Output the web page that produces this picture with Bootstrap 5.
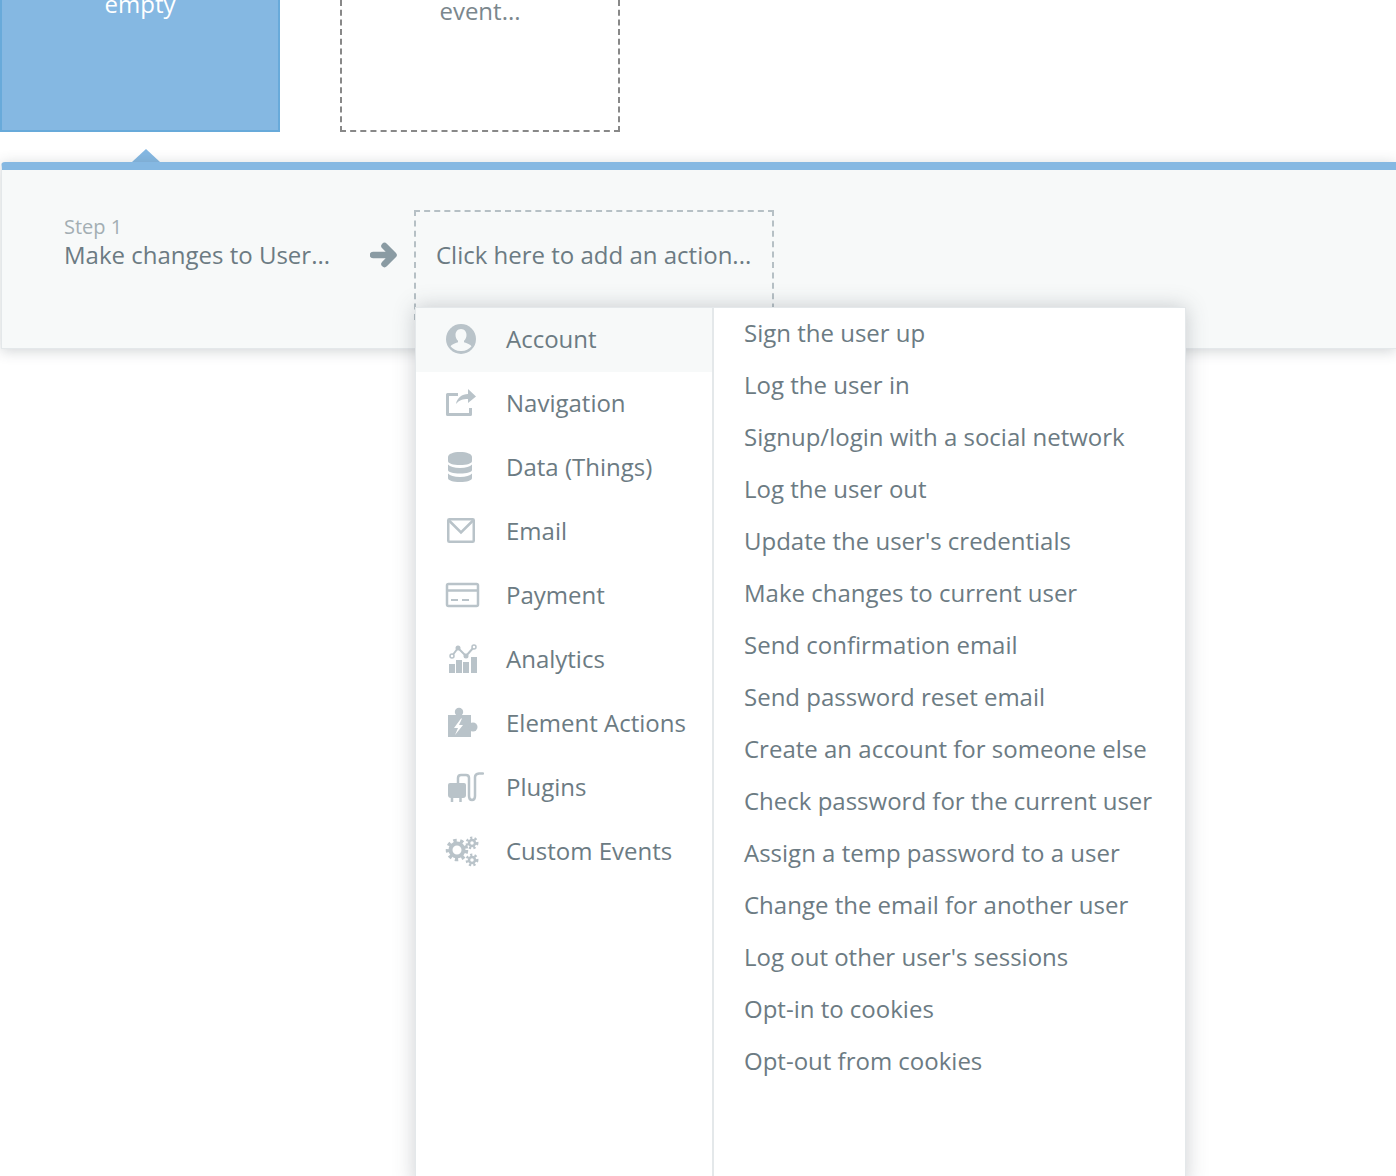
<!DOCTYPE html>
<html lang="en">
<head>
<meta charset="utf-8">
<title>Workflow</title>
<link href="https://cdn.jsdelivr.net/npm/bootstrap@5.3.0/dist/css/bootstrap.min.css" rel="stylesheet">
<style>
html,body{height:1176px;overflow:hidden;background:#fff}
body{font-family:"Open Sans","Liberation Sans",sans-serif;color:#6c7b83;font-size:24px;letter-spacing:0}
.ev-row{height:162px;gap:60px;align-items:flex-start;position:relative}
.ev-box{width:280px;height:132px;text-align:center;line-height:32px}
.ev-on{background:#85b8e2;border:2px solid #68aada;border-top:0;color:#fff}
.ev-on>span{display:block;margin-top:-12px}
.ev-new{border:2px dashed #888;border-top:0;color:#7b878d}
.ev-new>span{display:block;margin-top:-5px}
.ev-caret{position:absolute;left:132px;bottom:0;width:0;height:0;border-left:14px solid transparent;border-right:14px solid transparent;border-bottom:13px solid #85b8e2}
.wf-panel{position:relative;margin-left:1px;height:187px;background:#f7f9f9;border-top:8px solid #85b8e2;border-left:1px solid #e4e8ea;border-bottom:1px solid #e4e8ea;border-top-left-radius:4px;box-shadow:0 2px 14px rgba(60,70,80,.24);padding:40px 0 0 62px}
.step-name{width:306px;padding-top:4px;white-space:nowrap}
.step-num{font-size:20px;line-height:26px;color:#a3aeb3}
.step-title{line-height:28px;margin-top:1px}
.step-arrow{width:44px;padding-top:31px}
.step-arrow svg{display:block}
.act-box{width:360px;height:110px;border:2px dashed #b6c0c5;padding:23px 0 0 20px;line-height:40px;white-space:nowrap}
.act-menu{position:absolute;left:413px;top:137px;width:771px;height:880px;background:#fff;border:1px solid #e4e8ea;border-bottom:0;box-shadow:0 0 20px rgba(60,70,80,.26);display:flex}
.cat-col{width:298px;flex:none;border-right:2px solid #e4e8ea}
.cat-item{height:64px;display:flex;align-items:center;padding-left:28px;white-space:nowrap}
.cat-item.is-on{background:#f7f9f9}
.cat-item>span{margin-top:-2px}
.cat-item svg{width:40px;height:40px;margin-right:22px;flex:none;fill:#b9c3c9}
.cat-item svg .ln{fill:none;stroke:#b9c3c9}
.opt-col{padding-left:30px;flex:1}
.opt-item{height:52px;line-height:50px;white-space:nowrap}
</style>
</head>
<body>
<div class="d-flex ev-row">
  <div class="ev-box ev-on"><span>empty</span></div>
  <div class="ev-box ev-new"><span>event...</span></div>
  <div class="ev-caret"></div>
</div>
<div class="wf-panel d-flex">
  <div class="step-name">
    <div class="step-num">Step 1</div>
    <div class="step-title">Make changes to User...</div>
  </div>
  <div class="step-arrow">
    <svg width="28" height="28" viewBox="0 0 28 28"><path d="M3 14H23M14.500 5L23.500 14L14.500 23" fill="none" stroke="#8a9ba3" stroke-width="6.500" stroke-linecap="round" stroke-linejoin="round"/></svg>
  </div>
  <div class="act-box">Click here to add an action...</div>
  <div class="act-menu">
    <div class="cat-col">
      <div class="cat-item is-on">
        <svg viewBox="0 0 40 40"><circle cx="17" cy="19" r="15"/><path fill="#f7f9f9" d="M17 9c3.500 0 5.500 2.800 5.500 6 0 2.500-1 4.500-2.500 5.800v1.400c3 1 6.500 2.300 7.500 4.100A13 13 0 0 1 17 31a13 13 0 0 1-10.500-4.700c1-1.800 4.500-3.100 7.500-4.100v-1.400c-1.500-1.300-2.500-3.300-2.500-5.800 0-3.200 2-6 5.500-6z"/></svg>
        <span>Account</span>
      </div>
      <div class="cat-item">
        <svg viewBox="0 0 40 40"><path class="ln" stroke-width="3" stroke-linejoin="round" d="M14 10.500H3.500V30.500H26.500V24"/><path d="M12 20C13 14 18 10 24 10V5L32 12.500L24 19V15C19 15 15 16 12 20Z"/></svg>
        <span>Navigation</span>
      </div>
      <div class="cat-item">
        <svg viewBox="0 0 40 40"><path d="M4 9c0-3 5-5 12-5s12 2 12 5v4c0 2.500-5 4-12 4S4 15.500 4 13z"/><path d="M4 16.500c2 2 6 3.500 12 3.500s10-1.500 12-3.500V22c0 2-5 3.500-12 3.500S4 24 4 22z"/><path d="M4 25.500c2 2 6 3.500 12 3.500s10-1.500 12-3.500V30c0 2.500-5 4-12 4s-12-1.500-12-4z"/></svg>
        <span>Data (Things)</span>
      </div>
      <div class="cat-item">
        <svg viewBox="0 0 40 40"><rect class="ln" x="4.250" y="7.250" width="25.500" height="22.500" rx="1" stroke-width="2.500"/><path class="ln" stroke-width="2.500" d="M5 8.500L17 20.500L29 8.500"/></svg>
        <span>Email</span>
      </div>
      <div class="cat-item">
        <svg viewBox="0 0 40 40"><rect class="ln" x="3" y="8" width="31" height="22" rx="1.500" stroke-width="2.500"/><path class="ln" stroke-width="2.500" d="M3 14.500H34"/><path class="ln" stroke-width="2" d="M7 24H14M18 24H25"/></svg>
        <span>Payment</span>
      </div>
      <div class="cat-item">
        <svg viewBox="0 0 40 40"><rect x="5" y="24" width="6" height="9"/><rect x="12" y="20" width="6" height="13"/><rect x="19" y="22" width="6" height="11"/><rect x="27" y="17" width="6" height="16"/><path class="ln" stroke-width="2" d="M8 16L14 8L22 16L30 7"/><circle cx="8" cy="16" r="2" fill="#fff" stroke="#b9c3c9" stroke-width="1.500"/><circle cx="14" cy="8" r="2.500"/><circle cx="22" cy="16" r="2.500"/><circle cx="30" cy="7" r="2" fill="#fff" stroke="#b9c3c9" stroke-width="1.500"/></svg>
        <span>Analytics</span>
      </div>
      <div class="cat-item">
        <svg viewBox="0 0 40 40"><rect x="4" y="11" width="23" height="22"/><circle cx="15" cy="8" r="4.200"/><circle cx="29" cy="23" r="4.500"/><path fill="#fff" d="M17 14.500L10 24H14L11 31L19 21H15L18 14.500Z"/></svg>
        <span>Element Actions</span>
      </div>
      <div class="cat-item">
        <svg viewBox="0 0 40 40"><path d="M6 15H20a2 2 0 0 1 2 2V27a3 3 0 0 1-3 3H7a3 3 0 0 1-3-3V17a2 2 0 0 1 2-2z"/><path class="ln" stroke-width="2.500" d="M8 30V34M16.500 30V34"/><path class="ln" stroke-width="2.500" stroke-linecap="round" d="M14 15V10Q14 7 17 7H22Q25 7 25 10V28Q25 32 28 32Q31 32 31 28V9Q31 6 35 5.500H39"/></svg>
        <span>Plugins</span>
      </div>
      <div class="cat-item">
        <svg viewBox="0 0 40 40"><circle class="ln" cx="13" cy="18" r="6.500" stroke-width="4"/><circle class="ln" cx="13" cy="18" r="9.500" stroke-width="3.500" stroke-dasharray="3.400 3.400"/><circle class="ln" cx="28" cy="11" r="3" stroke-width="2.500"/><circle class="ln" cx="28" cy="11" r="5.200" stroke-width="2.500" stroke-dasharray="2.200 2.200"/><circle class="ln" cx="28" cy="28" r="3" stroke-width="2.500"/><circle class="ln" cx="28" cy="28" r="5.200" stroke-width="2.500" stroke-dasharray="2.200 2.200"/></svg>
        <span>Custom Events</span>
      </div>
    </div>
    <div class="opt-col">
      <div class="opt-item">Sign the user up</div>
      <div class="opt-item">Log the user in</div>
      <div class="opt-item">Signup/login with a social network</div>
      <div class="opt-item">Log the user out</div>
      <div class="opt-item">Update the user's credentials</div>
      <div class="opt-item">Make changes to current user</div>
      <div class="opt-item">Send confirmation email</div>
      <div class="opt-item">Send password reset email</div>
      <div class="opt-item">Create an account for someone else</div>
      <div class="opt-item">Check password for the current user</div>
      <div class="opt-item">Assign a temp password to a user</div>
      <div class="opt-item">Change the email for another user</div>
      <div class="opt-item">Log out other user's sessions</div>
      <div class="opt-item">Opt-in to cookies</div>
      <div class="opt-item">Opt-out from cookies</div>
    </div>
  </div>
</div>
<script src="https://cdn.jsdelivr.net/npm/bootstrap@5.3.0/dist/js/bootstrap.bundle.min.js"></script>
</body>
</html>
